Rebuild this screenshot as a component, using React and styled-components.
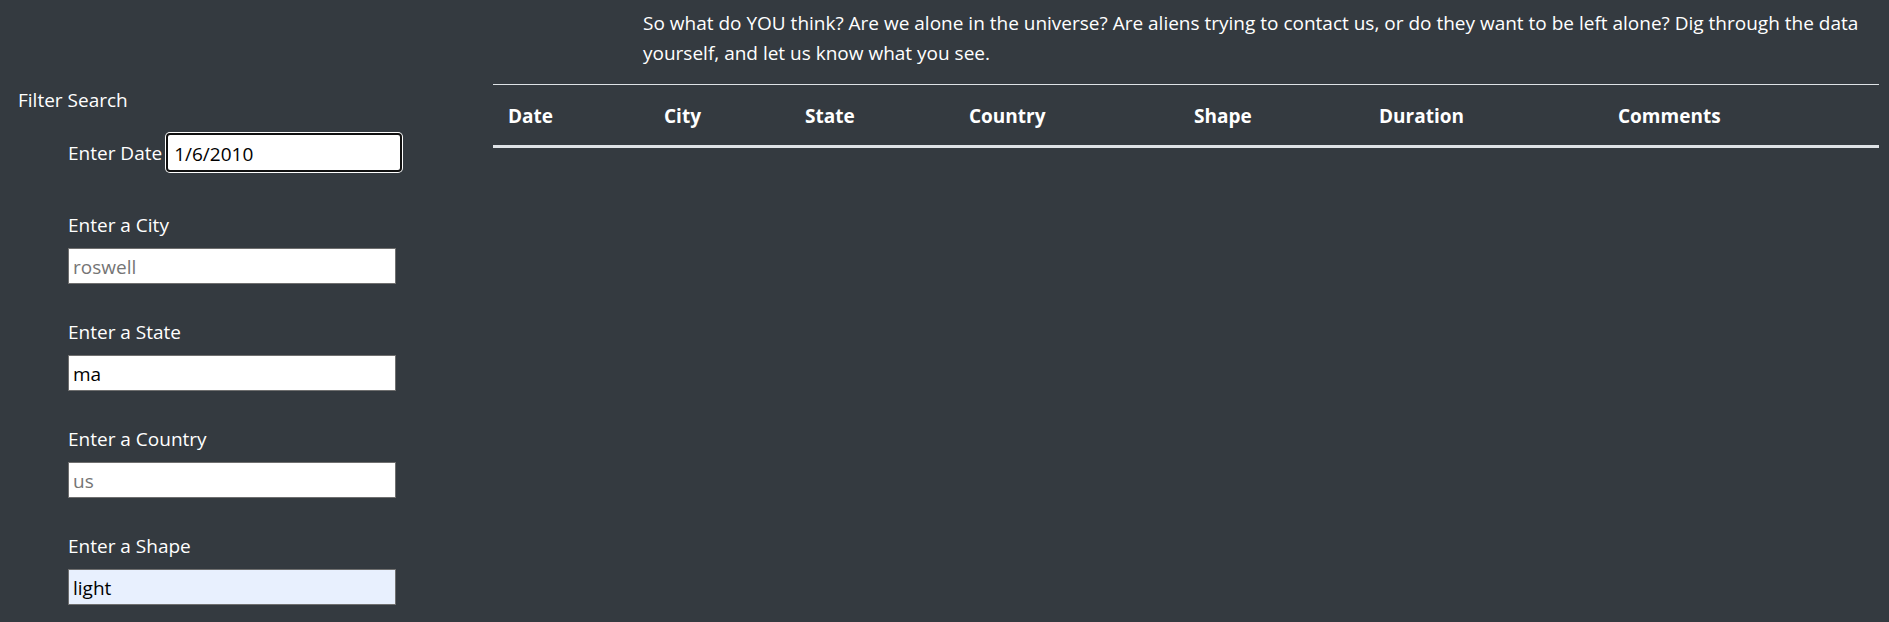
import React from 'react';
import styled, { createGlobalStyle } from 'styled-components';

const GlobalStyle = createGlobalStyle`
  html,
  body {
    margin: 0;
    background-color: #343a40;
  }

  body {
    font-family: 'Open Sans', 'Noto Sans', sans-serif;
    font-size: 19px;
    line-height: 30px;
    color: #fff;
  }
`;

const Page = styled.div`
  display: flex;
  flex-direction: column;
  min-height: 622px;
`;

const Intro = styled.p`
  margin: 0 0 16px;
  padding: 8px 12px 0 643px;
`;

const Content = styled.div`
  display: grid;
  grid-template-columns: 493px 1fr;
  padding-right: 10px;
`;

const Sidebar = styled.aside`
  display: flex;
  flex-direction: column;
  padding-left: 18px;
`;

const SidebarTitle = styled.div`
  margin-top: 1px;
`;

const FilterList = styled.ul`
  display: flex;
  flex-direction: column;
  gap: 33px;
  margin: 0;
  padding: 0 0 0 50px;
  list-style: none;
`;

const DateRow = styled.li`
  display: flex;
  align-items: center;
  gap: 4px;
  margin-top: 18px;
  margin-bottom: 5px;
`;

const FilterGroup = styled.li`
  display: flex;
  flex-direction: column;
  gap: 8px;
`;

const Input = styled.input`
  box-sizing: border-box;
  width: ${(p) => (p.focused ? '236px' : '328px')};
  height: ${(p) => (p.focused ? '39px' : '36px')};
  padding: ${(p) => (p.focused ? '2px 0 0 6px' : '1px 0 0 4px')};
  border: ${(p) => (p.focused ? '2px solid #111' : '1px solid #6f6f6f')};
  border-radius: ${(p) => (p.focused ? '4px' : '0')};
  box-shadow: ${(p) => (p.focused ? '0 0 0 1px #fff' : 'none')};
  background-color: ${(p) => (p.autofilled ? '#e8f0fe' : '#fff')};
  font-family: inherit;
  font-size: 19px;
  color: #000;
  outline: none;

  &::placeholder {
    color: #757575;
  }
`;

const Table = styled.table`
  width: 100%;
  border-collapse: collapse;
  border-top: 1px solid #dee2e6;
  align-self: start;
  table-layout: fixed;
`;

const HeadCell = styled.th`
  box-sizing: border-box;
  width: ${(p) => p.w}px;
  padding: 16px 15px 14px;
  text-align: left;
  font-weight: 700;
  border-bottom: 3px solid #dee2e6;
`;

const columns = [
  ['Date', 156],
  ['City', 141],
  ['State', 164],
  ['Country', 225],
  ['Shape', 185],
  ['Duration', 239],
  ['Comments', 276],
];

function App() {
  return (
    <Page>
      <GlobalStyle />
      <Intro>
        So what do YOU think? Are we alone in the universe? Are aliens trying to
        contact us, or do they want to be left alone? Dig through the data
        yourself, and let us know what you see.
      </Intro>
      <Content>
        <Sidebar>
          <SidebarTitle>Filter Search</SidebarTitle>
          <FilterList>
            <DateRow>
              <label htmlFor="datetime">Enter Date</label>
              <Input id="datetime" type="text" defaultValue="1/6/2010" focused />
            </DateRow>
            <FilterGroup>
              <label htmlFor="city">Enter a City</label>
              <Input id="city" type="text" placeholder="roswell" />
            </FilterGroup>
            <FilterGroup>
              <label htmlFor="state">Enter a State</label>
              <Input id="state" type="text" defaultValue="ma" />
            </FilterGroup>
            <FilterGroup>
              <label htmlFor="country">Enter a Country</label>
              <Input id="country" type="text" placeholder="us" />
            </FilterGroup>
            <FilterGroup>
              <label htmlFor="shape">Enter a Shape</label>
              <Input id="shape" type="text" defaultValue="light" autofilled />
            </FilterGroup>
          </FilterList>
        </Sidebar>
        <Table>
          <thead>
            <tr>
              {columns.map(([name, w]) => (
                <HeadCell key={name} w={w}>
                  {name}
                </HeadCell>
              ))}
            </tr>
          </thead>
          <tbody />
        </Table>
      </Content>
    </Page>
  );
}

export default App;
